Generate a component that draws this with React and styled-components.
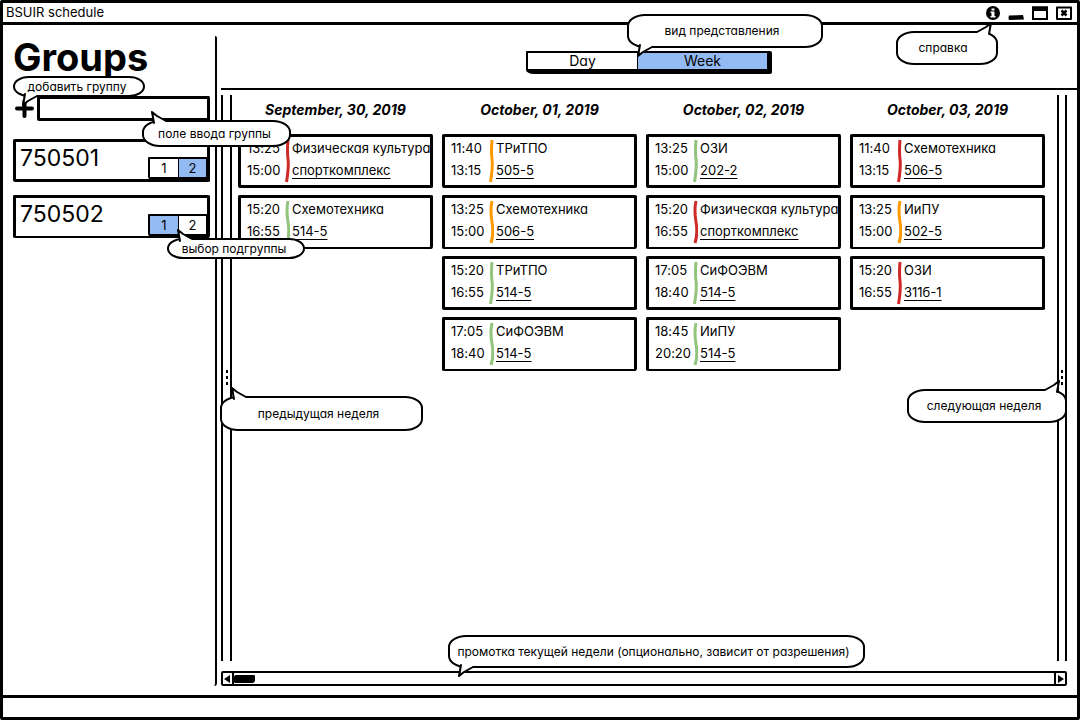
import React from "react";
import styled, { createGlobalStyle, css } from "styled-components";

const ink = "#000";
const selected = "#94baf3";
const accents = { red: "#cf2a27", orange: "#ff9900", green: "#93c47d" };

const GlobalStyle = createGlobalStyle`
  *, *::before, *::after { box-sizing: border-box; }
  body {
    margin: 0;
    background: #fff;
    color: ${ink};
    font-family: Inter, "Open Sans", sans-serif;
    font-feature-settings: "cv11", "calt" 0;
    font-size: 13px;
  }
  button, input { font: inherit; font-feature-settings: inherit; color: inherit; }
`;

const sketchBorder = css`
  border: 3px solid ${ink};
  border-bottom-width: ${(p) => (p.$alt ? "2px" : "3px")};
  border-radius: ${(p) => (p.$alt ? "1px 3px 2px 4px / 2px 1px 3px 1px" : "3px 1px 4px 2px / 1px 3px 1px 2px")};
`;

const Window = styled.div`
  min-height: 100vh;
  display: flex;
  flex-direction: column;
  border: 3px solid ${ink};
  border-radius: 2px;
`;

const TitleBar = styled.header`
  height: 22px;
  display: flex;
  align-items: center;
  justify-content: space-between;
  padding: 0 5px 0 3px;
  border-bottom: 3px solid ${ink};
  line-height: 19px;
`;

const WindowTitle = styled.span`
  font-size: 13px;
`;

const WindowControls = styled.div`
  display: flex;
  gap: 8px;
`;

const IconButton = styled.button`
  position: relative;
  display: flex;
  padding: 0;
  border: 0;
  background: none;
`;

const Body = styled.div`
  flex: 1;
  display: flex;
  padding: 11px 0 9px;
`;

const Sidebar = styled.aside`
  flex: 0 0 214px;
  min-width: 0;
  padding: 0 5px 0 10px;
  border-right: 2px solid ${ink};
  border-radius: 0 2px 3px 0;
`;

const Heading = styled.h1`
  margin: 0 0 18px;
  font-size: 38px;
  line-height: 42px;
  font-weight: 700;
`;

const AddGroupForm = styled.form`
  position: relative;
  display: flex;
  margin-bottom: 18px;
`;

const AddButton = styled.button`
  flex: 0 0 24px;
  display: flex;
  align-items: center;
  padding: 0 0 0 2px;
  border: 0;
  background: none;
`;

const GroupInput = styled.input`
  flex: 1;
  min-width: 0;
  height: 25px;
  padding: 0 6px;
  background: #fff;
  ${sketchBorder}
`;

const GroupList = styled.div`
  display: flex;
  flex-direction: column;
  gap: 13px;
`;

const GroupCard = styled.section`
  position: relative;
  height: 43px;
  display: flex;
  justify-content: space-between;
  align-items: flex-end;
  padding-left: 4px;
  ${sketchBorder}
`;

const GroupName = styled.h2`
  margin: 0;
  align-self: flex-start;
  font-size: 23px;
  line-height: 33px;
  font-weight: 400;
`;

const Segments = styled.div`
  position: relative;
  display: flex;
  border: 2px solid ${ink};
  border-width: 2px ${(p) => (p.$wide ? "5px 5px" : "3px 4px")} 2px;
  border-radius: 1px 2px 3px 8px / 1px 2px 2px 4px;
  background: #fff;
  ${(p) => !p.$wide && css`margin: 0 -2px -2px 0;`}
`;

const Segment = styled.button`
  width: ${(p) => p.$width}px;
  height: ${(p) => (p.$wide ? 16 : 18)}px;
  padding: 0;
  border: 0;
  font-size: ${(p) => (p.$wide ? 14 : 13)}px;
  line-height: ${(p) => (p.$wide ? 16 : 18)}px;
  background: ${(p) => (p["aria-pressed"] ? selected : "#fff")};
  & + & { border-left: 1px solid ${ink}; }
`;

const Main = styled.main`
  flex: 1;
  min-width: 0;
  display: flex;
  flex-direction: column;
  padding-left: 4px;
`;

const Toolbar = styled.div`
  height: 54px;
  display: flex;
  justify-content: center;
  align-items: flex-start;
  padding-top: 15px;
  border-bottom: 2px solid ${ink};
`;

const Week = styled.div`
  flex: 1;
  display: flex;
  margin: 5px 10px 10px 0;
`;

const Rail = styled.button`
  position: relative;
  flex: 0 0 ${(p) => (p.$next ? 10 : 11)}px;
  display: flex;
  align-items: center;
  justify-content: center;
  padding: 0;
  border: solid ${ink};
  border-width: 0 2px;
  background: #fff;
`;

const Grip = styled.span`
  width: 2px;
  height: 16px;
  background: repeating-linear-gradient(${ink} 0 3px, transparent 3px 6px);
`;

const Days = styled.div`
  flex: 1;
  min-width: 0;
  display: grid;
  grid-template-columns: repeat(4, minmax(0, 1fr));
  column-gap: 9px;
  padding: 5px 12px 0 6px;
`;

const DayColumn = styled.section`
  display: flex;
  flex-direction: column;
  gap: 7px;
`;

const DayTitle = styled.h3`
  margin: 0 0 7px;
  font-size: 14px;
  line-height: 20px;
  font-weight: 700;
  font-style: italic;
  text-align: center;
`;

const Lesson = styled.article`
  height: 54px;
  display: flex;
  padding-left: 6px;
  line-height: 22px;
  white-space: nowrap;
  ${sketchBorder}
`;

const Times = styled.div`
  flex: 0 0 38px;
  display: flex;
  flex-direction: column;
`;

const AccentLine = styled.svg`
  flex: none;
  margin: 2px 2px 0 0;
`;

const Details = styled.div`
  display: flex;
  flex-direction: column;
  align-items: flex-start;
`;

const Place = styled.a`
  color: inherit;
  text-decoration: underline;
  text-decoration-thickness: 1px;
  text-underline-offset: 3px;
  text-decoration-skip-ink: none;
`;

const ScrollBar = styled.div`
  position: relative;
  height: 15px;
  display: flex;
  align-items: stretch;
  margin-right: 10px;
  border: 2px solid ${ink};
  border-radius: 2px;
`;

const ScrollButton = styled.button`
  flex: 0 0 11px;
  display: flex;
  align-items: center;
  justify-content: center;
  padding: 0;
  border: 0;
  background: #fff;
  border-${(p) => (p.$end ? "left" : "right")}: 2px solid ${ink};
`;

const Track = styled.div`
  flex: 1;
  display: flex;
  align-items: center;
`;

const Thumb = styled.span`
  width: 21px;
  height: 8px;
  border-radius: 2px 1px 3px 1px;
  background: ${ink};
`;

const StatusBar = styled.footer`
  height: 22px;
  border-top: 3px solid ${ink};
`;

const Balloon = styled.span`
  position: absolute;
  z-index: 2;
  left: ${(p) => p.$left ?? "auto"};
  right: ${(p) => p.$right ?? "auto"};
  top: ${(p) => p.$top};
  width: ${(p) => p.$width}px;
  height: ${(p) => p.$height}px;
  padding-right: ${(p) => p.$shift ?? 0}px;
  display: flex;
  align-items: center;
  justify-content: center;
  border: 2px solid ${ink};
  border-radius: 18px / 12px;
  background: #fff;
  font-size: 12px;
  line-height: 16px;
  font-weight: 400;
  white-space: nowrap;
`;

const TailDrawing = styled.svg`
  position: absolute;
  left: ${(p) => p.$x}px;
  ${(p) => (p.$down ? "bottom" : "top")}: -11px;
  overflow: visible;
`;

function Note({ children, tailX, down, flip, ...place }) {
  const t = `${flip ? "translate(16 0) scale(-1 1)" : ""} ${down ? "translate(0 14) scale(1 -1)" : ""}`;
  return (
    <Balloon role="note" {...place}>
      <TailDrawing $x={tailX} $down={down} width="16" height="14" viewBox="0 0 16 14" aria-hidden="true">
        <g transform={t}>
          <path d="M1 1 L3 12 L3 14 L14 14 L15 10 Z" fill="#fff" />
          <path d="M3 12 L1 1 L6 5 L15 10" fill="none" stroke={ink} strokeWidth="2" strokeLinejoin="round" strokeLinecap="round" />
          <path d="M0 0 L3 2 L2 6 Z" fill={ink} />
        </g>
      </TailDrawing>
      {children}
    </Balloon>
  );
}

function Accent({ color, alt }) {
  return (
    <AccentLine width="5" height="44" viewBox="0 0 5 44" aria-hidden="true">
      <path
        d={alt ? "M3 1Q1 10 3 22T2 43" : "M3 1Q2 12 3 20T1.500 43"}
        fill="none"
        stroke={accents[color]}
        strokeWidth="3"
      />
    </AccentLine>
  );
}

const days = [
  {
    title: "September, 30, 2019",
    lessons: [
      ["13:25", "15:00", "red", "Физическая культура", "спорткомплекс"],
      ["15:20", "16:55", "green", "Схемотехника", "514-5"],
    ],
  },
  {
    title: "October, 01, 2019",
    lessons: [
      ["11:40", "13:15", "orange", "ТРиТПО", "505-5"],
      ["13:25", "15:00", "orange", "Схемотехника", "506-5"],
      ["15:20", "16:55", "green", "ТРиТПО", "514-5"],
      ["17:05", "18:40", "green", "СиФОЭВМ", "514-5"],
    ],
  },
  {
    title: "October, 02, 2019",
    lessons: [
      ["13:25", "15:00", "green", "ОЗИ", "202-2"],
      ["15:20", "16:55", "red", "Физическая культура", "спорткомплекс"],
      ["17:05", "18:40", "green", "СиФОЭВМ", "514-5"],
      ["18:45", "20:20", "green", "ИиПУ", "514-5"],
    ],
  },
  {
    title: "October, 03, 2019",
    lessons: [
      ["11:40", "13:15", "red", "Схемотехника", "506-5"],
      ["13:25", "15:00", "orange", "ИиПУ", "502-5"],
      ["15:20", "16:55", "red", "ОЗИ", "311б-1"],
    ],
  },
];

function Group({ name, active, alt, children }) {
  return (
    <GroupCard $alt={alt}>
      <GroupName>{name}</GroupName>
      <Segments role="group" aria-label={name}>
        <Segment $width={28} aria-pressed={active === 1}>1</Segment>
        <Segment $width={28} aria-pressed={active === 2}>2</Segment>
      </Segments>
      {children}
    </GroupCard>
  );
}

export default function App() {
  return (
    <>
      <GlobalStyle />
      <Window>
        <TitleBar>
          <WindowTitle>BSUIR schedule</WindowTitle>
          <WindowControls>
            <IconButton aria-label="Info">
              <svg width="14" height="14" viewBox="0 0 14 14">
                <circle cx="7" cy="7" r="7" fill={ink} />
                <path d="M5.5 2.5h3v2h-3zM4.5 5.5h4v4.500h1v1.500h-5v-1.500h1v-3h-1z" fill="#fff" />
              </svg>
              <Note $left="-90px" $top="25px" $width={102} $height={34} $shift={8} tailX={78} flip>справка</Note>
            </IconButton>
            <IconButton aria-label="Minimize">
              <svg width="16" height="14" viewBox="0 0 16 14">
                <path d="M1 9.500 L15 9 L16 13.500 L1 14 Q0 12 1 9.500Z" fill={ink} />
              </svg>
            </IconButton>
            <IconButton aria-label="Maximize">
              <svg width="16" height="14" viewBox="0 0 16 14">
                <path d="M1 1.500H15V13H1Z" fill="#fff" stroke={ink} strokeWidth="2" />
                <path d="M0 .5H16V5H0Z" fill={ink} />
              </svg>
            </IconButton>
            <IconButton aria-label="Close">
              <svg width="16" height="14" viewBox="0 0 16 14">
                <path d="M1 1.500H15V13H1Z" fill="#fff" stroke={ink} strokeWidth="2" strokeLinejoin="round" />
                <path d="M5.500 4.500L10.500 9.500M10.500 4.500L5.500 9.500" stroke={ink} strokeWidth="2.500" />
              </svg>
            </IconButton>
          </WindowControls>
        </TitleBar>

        <Body>
          <Sidebar>
            <Heading>Groups</Heading>
            <AddGroupForm onSubmit={(e) => e.preventDefault()}>
              <AddButton aria-label="Добавить группу">
                <svg width="19" height="19" viewBox="0 0 19 19">
                  <path d="M2 9.500H17M9.500 2V17" stroke={ink} strokeWidth="4" strokeLinecap="round" />
                </svg>
              </AddButton>
              <GroupInput aria-label="Группа" />
              <Note $left="0" $top="-20px" $width={132} $height={21} $shift={4} tailX={7} down>добавить группу</Note>
              <Note $left="129px" $top="24px" $width={149} $height={27} $shift={4} tailX={7}>поле ввода группы</Note>
            </AddGroupForm>
            <GroupList>
              <Group name="750501" active={2} />
              <Group name="750502" active={1} alt>
                <Note $left="151px" $top="40px" $width={138} $height={21} $shift={4} tailX={8}>выбор подгруппы</Note>
              </Group>
            </GroupList>
          </Sidebar>

          <Main>
            <Toolbar>
              <Segments $wide role="group" aria-label="View">
                <Segment $wide $width={109} aria-pressed={false}>Day</Segment>
                <Segment $wide $width={130} aria-pressed={true}>Week</Segment>
                <Note $left="99px" $top="-39px" $width={196} $height={34} $shift={6} tailX={8} down>вид представления</Note>
              </Segments>
            </Toolbar>
            <Week>
              <Rail aria-label="Previous week">
                <Grip />
                <Note $left="-3px" $top="calc(50% + 18px)" $width={203} $height={35} $shift={6} tailX={9}>предыдущая неделя</Note>
              </Rail>
              <Days>
                {days.map((day) => (
                  <DayColumn key={day.title}>
                    <DayTitle>{day.title}</DayTitle>
                    {day.lessons.map(([start, end, color, name, place], i) => (
                      <Lesson key={start} $alt={i % 2 === 1}>
                        <Times>
                          <time>{start}</time>
                          <time>{end}</time>
                        </Times>
                        <Accent color={color} alt={i % 2 === 1} />
                        <Details>
                          <span>{name}</span>
                          <Place href="#">{place}</Place>
                        </Details>
                      </Lesson>
                    ))}
                  </DayColumn>
                ))}
              </Days>
              <Rail $next aria-label="Next week">
                <Grip />
                <Note $right="-2px" $top="calc(50% + 11px)" $width={160} $height={34} $shift={6} tailX={135} flip>следующая неделя</Note>
              </Rail>
            </Week>
            <ScrollBar>
              <ScrollButton aria-label="Scroll left">
                <svg width="7" height="8" viewBox="0 0 7 8"><path d="M0 4L6 0V8Z" fill={ink} /></svg>
              </ScrollButton>
              <Track><Thumb /></Track>
              <ScrollButton $end aria-label="Scroll right">
                <svg width="7" height="8" viewBox="0 0 7 8"><path d="M7 4L1 0V8Z" fill={ink} /></svg>
              </ScrollButton>
              <Note $left="225px" $top="-38px" $width={417} $height={33} $shift={6} tailX={8} down>
                промотка текущей недели (опционально, зависит от разрешения)
              </Note>
            </ScrollBar>
          </Main>
        </Body>
        <StatusBar />
      </Window>
    </>
  );
}
